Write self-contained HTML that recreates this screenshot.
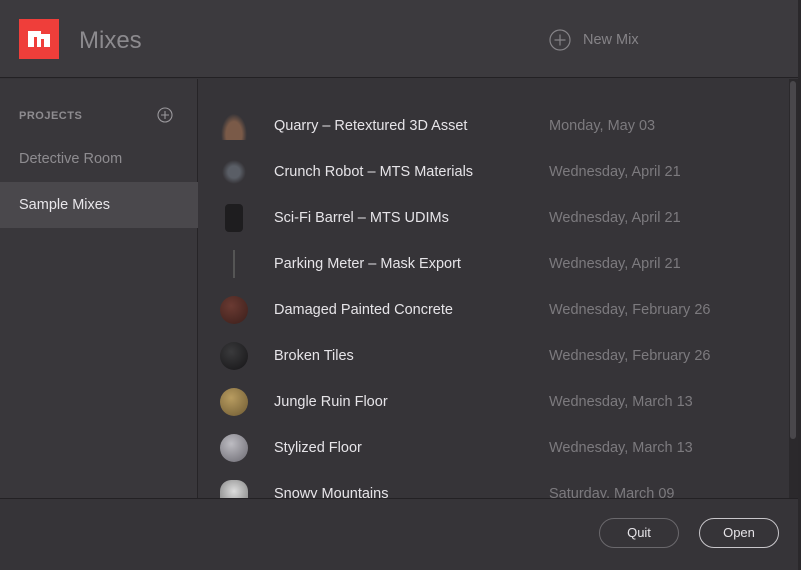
<!DOCTYPE html>
<html><head><meta charset="utf-8"><style>
*{margin:0;padding:0;box-sizing:border-box}
body{width:801px;height:570px;background:#363438;font-family:"Liberation Sans",sans-serif;position:relative;overflow:hidden}
.hdr{position:absolute;left:0;top:0;width:801px;height:78px;background:#3c3a3e;border-bottom:1px solid #232124}
.logo{position:absolute;left:19px;top:19px;width:40px;height:40px;background:#ef3e3a}
.title{position:absolute;left:79px;top:27px;font-size:24px;color:#8c8a8e}
.newmix{position:absolute;left:549px;top:29px;height:22px;line-height:22px;color:#858387;font-size:14.5px}
.side{position:absolute;left:0;top:79px;width:198px;height:419px;background:#39373b;border-right:1px solid #262427}
.proj{position:absolute;left:19px;top:110px;font-size:11px;font-weight:bold;letter-spacing:.5px;color:#8e8c90}
.sitem{position:absolute;left:0;width:198px;height:46px;line-height:46px;padding-left:19px;font-size:14.5px}
.list{position:absolute;left:199px;top:79px;width:590px;height:419px;overflow:hidden;background:#363438}
.row{position:absolute;left:0;width:590px;height:46px}
.row .n{position:absolute;left:75px;top:0;line-height:46px;font-size:14.5px;color:#e6e4e8}
.row .d{position:absolute;left:350px;top:0;line-height:46px;font-size:14.5px;color:#7c7a7e}
.th{position:absolute;left:21px;top:9px;width:28px;height:28px}
.sb{position:absolute;left:789px;top:79px;width:9px;height:419px;background:#2b292c}
.sb div{position:absolute;left:1px;top:2px;width:6px;height:358px;background:#49474b;border-radius:3px}
.edge{position:absolute;left:798px;top:0;width:3px;height:570px;background:#2a282b}
.foot{position:absolute;left:0;top:498px;width:798px;height:72px;background:#363438;border-top:1px solid #232124}
.btn{position:absolute;top:19px;width:80px;height:30px;border-radius:15px;text-align:center;line-height:28px;font-size:13px;color:#e6e4e8}
</style></head><body>
<div class="hdr">
<div class="logo"><svg width="40" height="40" viewBox="0 0 40 40"><path d="M9 12h13v3h9v13h-6v-8h-3v8h-4v-10h-3v10H9z" fill="#fff"/></svg></div>
<div class="title">Mixes</div>
<div class="newmix"><svg width="22" height="22" style="vertical-align:top;margin-right:12px" viewBox="0 0 22 22"><circle cx="11" cy="11" r="10" fill="none" stroke="#858387" stroke-width="1.2"/><path d="M11 5.5v11M5.5 11h11" stroke="#858387" stroke-width="1.2"/></svg>New Mix</div>
</div>
<div class="side">
<div class="sitem" style="top:57px;color:#8e8c90">Detective Room</div>
<div class="sitem" style="top:103px;background:#4a484c;color:#e8e6ea">Sample Mixes</div>
</div>
<div class="proj">PROJECTS</div>
<svg style="position:absolute;left:157px;top:107px" width="16" height="16" viewBox="0 0 16 16"><circle cx="8" cy="8" r="7" fill="none" stroke="#9a989c" stroke-width="1.1"/><path d="M8 4v8M4 8h8" stroke="#9a989c" stroke-width="1.1"/></svg>
<div class="list">
<div class="row" style="top:24px"><div class="th" style="background:radial-gradient(ellipse at 50% 80%,#7a5a48 40%,transparent 65%)"></div><div class="n">Quarry – Retextured 3D Asset</div><div class="d">Monday, May 03</div></div>
<div class="row" style="top:70px"><div class="th" style="background:radial-gradient(ellipse at 50% 50%,#5a5e66 30%,transparent 60%)"></div><div class="n">Crunch Robot – MTS Materials</div><div class="d">Wednesday, April 21</div></div>
<div class="row" style="top:116px"><div class="th" style="left:26px;width:18px;background:#1e1d1f;border-radius:4px"></div><div class="n">Sci-Fi Barrel – MTS UDIMs</div><div class="d">Wednesday, April 21</div></div>
<div class="row" style="top:162px"><div class="th" style="left:34px;width:2px;background:#555"></div><div class="n">Parking Meter – Mask Export</div><div class="d">Wednesday, April 21</div></div>
<div class="row" style="top:208px"><div class="th" style="border-radius:50%;background:radial-gradient(circle at 40% 35%,#6a3a32,#3a1e1a)"></div><div class="n">Damaged Painted Concrete</div><div class="d">Wednesday, February 26</div></div>
<div class="row" style="top:254px"><div class="th" style="border-radius:50%;background:radial-gradient(circle at 40% 35%,#3a3a3c,#151416)"></div><div class="n">Broken Tiles</div><div class="d">Wednesday, February 26</div></div>
<div class="row" style="top:300px"><div class="th" style="border-radius:50%;background:radial-gradient(circle at 40% 35%,#b89c60,#6e5a32)"></div><div class="n">Jungle Ruin Floor</div><div class="d">Wednesday, March 13</div></div>
<div class="row" style="top:346px"><div class="th" style="border-radius:50%;background:radial-gradient(circle at 40% 35%,#bdbcc2,#6a6870)"></div><div class="n">Stylized Floor</div><div class="d">Wednesday, March 13</div></div>
<div class="row" style="top:392px"><div class="th" style="border-radius:40% 40% 0 0;background:radial-gradient(circle at 50% 40%,#ddd,#777)"></div><div class="n">Snowy Mountains</div><div class="d">Saturday, March 09</div></div>
</div>
<div class="sb"><div></div></div>
<div class="foot">
<div class="btn" style="left:599px;border:1px solid #6a686c">Quit</div>
<div class="btn" style="left:699px;border:1px solid #c8c6ca">Open</div>
</div>
<div class="edge"></div>
</body></html>
